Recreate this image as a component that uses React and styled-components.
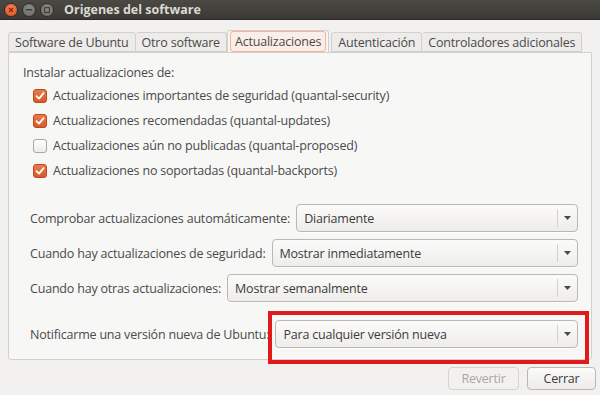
import React from "react";
import styled, { createGlobalStyle } from "styled-components";

const Global = createGlobalStyle`
  html, body {
    margin: 0;
    padding: 0;
    background: #f2f1ef;
  }
  body {
    font-family: "Open Sans", "Noto Sans", sans-serif;
    font-size: 12.5px;
    letter-spacing: -0.2px;
    color: #4a4a4a;
  }
`;

const Window = styled.div`
  width: 600px;
  height: 395px;
  overflow: hidden;
  display: flex;
  flex-direction: column;
  background: #f2f1ef;
`;

const TitleBar = styled.div`
  height: 19px;
  display: flex;
  align-items: center;
  padding-left: 4px;
  background: linear-gradient(#4a4944, #3b3a36);
  border-bottom: 1px solid #2c2b28;
`;

const WinButton = styled.span`
  width: 12px;
  height: 12px;
  border-radius: 50%;
  margin-right: 4px;
  display: flex;
  align-items: center;
  justify-content: center;
  background: ${(p) =>
    p.$close
      ? "radial-gradient(circle at 50% 35%, #f57d52, #e0541f)"
      : "radial-gradient(circle at 50% 35%, #8a8984, #6a6965)"};
  border: 1px solid #2f2e2b;
`;

const Title = styled.span`
  margin-left: 6px;
  font-weight: 700;
  font-size: 12.5px;
  color: #dcd9d2;
  letter-spacing: 0;
`;

const Body = styled.div`
  flex: 1;
  display: flex;
  flex-direction: column;
  padding: 10px 8px 0 8px;
`;

const Tabs = styled.div`
  display: flex;
  align-items: flex-end;
  height: 22px;
`;

const Tab = styled.div`
  height: ${(p) => (p.$active ? "22px" : "20px")};
  box-sizing: border-box;
  display: flex;
  align-items: center;
  padding: 0 ${(p) => (p.$active ? "2px" : "6px")};
  margin-right: ${(p) => (p.$active ? "2px" : "0")};
  border: 1px solid #d3d0ca;
  border-bottom: ${(p) => (p.$active ? "none" : "1px solid #d3d0ca")};
  border-left: ${(p) => (p.$first || p.$active ? "1px solid #d3d0ca" : "none")};
  border-radius: 3px 3px 0 0;
  background: ${(p) => (p.$active ? "#f7f7f6" : "#edecea")};
  color: #4a4a4a;
  white-space: nowrap;
`;

const FocusRing = styled.span`
  padding: 1px 4px;
  border: 1px solid #f3b39b;
  border-radius: 3px;
  background: #fbeee8;
`;

const Panel = styled.div`
  height: 308px;
  box-sizing: border-box;
  border: 1px solid #d3d0ca;
  border-radius: 0 0 3px 3px;
  background: #f7f7f6;
  padding: 10px 13px 0 14px;
  display: flex;
  flex-direction: column;
`;

const Heading = styled.div`
  height: 20px;
  line-height: 20px;
`;

const CheckList = styled.div`
  display: flex;
  flex-direction: column;
  padding: 0 0 0 10px;
`;

const CheckRow = styled.label`
  height: 25px;
  display: flex;
  align-items: center;
  gap: 6px;
`;

const Box = styled.span`
  width: 14px;
  height: 14px;
  box-sizing: border-box;
  border-radius: 3px;
  display: flex;
  align-items: center;
  justify-content: center;
  border: 1px solid ${(p) => (p.$on ? "#b9491c" : "#a9a6a0")};
  background: ${(p) =>
    p.$on ? "linear-gradient(#ec7a4b, #d85a28)" : "linear-gradient(#ffffff, #eeedeb)"};
`;

const Selects = styled.div`
  display: flex;
  flex-direction: column;
  gap: 7px;
  padding: 21px 0 0 7px;
`;

const SelectRow = styled.div`
  display: flex;
  align-items: center;
  gap: 6px;
  height: 28px;
  margin-top: ${(p) => (p.$spaced ? "11px" : "0")};
  white-space: nowrap;
`;

const ComboWrap = styled.div`
  flex: 1;
  position: relative;
  ${(p) =>
    p.$marked &&
    `
    &::after {
      content: "";
      position: absolute;
      left: -7px;
      right: -11px;
      top: -9px;
      bottom: -16px;
      border: 4px solid #e0191c;
      pointer-events: none;
    }
  `}
`;

const Combo = styled.div`
  height: 28px;
  box-sizing: border-box;
  display: flex;
  align-items: center;
  border: 1px solid #bbb8b2;
  border-radius: 4px;
  background: linear-gradient(#fbfbfa, #eeedeb);
  box-shadow: 0 1px 0 rgba(255, 255, 255, 0.8);
  color: #3c3c3c;
`;

const ComboText = styled.span`
  flex: 1;
  padding-left: 7px;
`;

const ComboArrow = styled.span`
  width: 19px;
  height: 18px;
  border-left: 1px solid #d4d1cb;
  display: flex;
  align-items: center;
  justify-content: center;
`;

const Footer = styled.div`
  display: flex;
  justify-content: flex-end;
  gap: 8px;
  padding-top: 7px;
  margin-right: -4px;
`;

const Button = styled.div`
  height: 23px;
  width: ${(p) => p.$w}px;
  box-sizing: border-box;
  display: flex;
  align-items: center;
  justify-content: center;
  border: 1px solid ${(p) => (p.$disabled ? "#d6d4cf" : "#bbb8b2")};
  border-radius: 4px;
  background: ${(p) =>
    p.$disabled ? "#f2f1ef" : "linear-gradient(#fbfbfa, #ecebe9)"};
  color: ${(p) => (p.$disabled ? "#a9a7a3" : "#3c3c3c")};
`;

const Check = () => (
  <svg width="10" height="10" viewBox="0 0 10 10">
    <path d="M1.5 5.2 L4 7.6 L8.6 2.2" fill="none" stroke="#fff" strokeWidth="1.8" strokeLinecap="round" strokeLinejoin="round" />
  </svg>
);

const Arrow = () => (
  <svg width="7" height="4" viewBox="0 0 7 4">
    <path d="M0 0 H7 L3.5 4 Z" fill="#4a4a4a" />
  </svg>
);

const checks = [
  ["Actualizaciones importantes de seguridad (quantal-security)", true],
  ["Actualizaciones recomendadas (quantal-updates)", true],
  ["Actualizaciones aún no publicadas (quantal-proposed)", false],
  ["Actualizaciones no soportadas (quantal-backports)", true],
];

const selects = [
  ["Comprobar actualizaciones automáticamente:", "Diariamente"],
  ["Cuando hay actualizaciones de seguridad:", "Mostrar inmediatamente"],
  ["Cuando hay otras actualizaciones:", "Mostrar semanalmente"],
];

const Select = ({ value, marked }) => (
  <ComboWrap $marked={marked}>
    <Combo>
      <ComboText>{value}</ComboText>
      <ComboArrow>
        <Arrow />
      </ComboArrow>
    </Combo>
  </ComboWrap>
);

const App = () => {
  return (
    <Window>
      <Global />
      <TitleBar>
        <WinButton $close>
          <svg width="6" height="6" viewBox="0 0 6 6">
            <path d="M1 1 L5 5 M5 1 L1 5" stroke="#7a2a0e" strokeWidth="1.2" />
          </svg>
        </WinButton>
        <WinButton>
          <svg width="6" height="2" viewBox="0 0 6 2">
            <rect width="6" height="1.5" fill="#3f3e3a" />
          </svg>
        </WinButton>
        <WinButton>
          <svg width="6" height="6" viewBox="0 0 6 6">
            <rect x="0.6" y="0.6" width="4.8" height="4.8" fill="none" stroke="#3f3e3a" strokeWidth="1.1" />
          </svg>
        </WinButton>
        <Title>Origenes del software</Title>
      </TitleBar>
      <Body>
        <Tabs>
          <Tab $first>Software de Ubuntu</Tab>
          <Tab>Otro software</Tab>
          <Tab $active>
            <FocusRing>Actualizaciones</FocusRing>
          </Tab>
          <Tab $first>Autenticación</Tab>
          <Tab>Controladores adicionales</Tab>
        </Tabs>
        <Panel>
          <Heading>Instalar actualizaciones de:</Heading>
          <CheckList>
            {checks.map(([label, on]) => (
              <CheckRow key={label}>
                <Box $on={on}>{on && <Check />}</Box>
                {label}
              </CheckRow>
            ))}
          </CheckList>
          <Selects>
            {selects.map(([label, value]) => (
              <SelectRow key={label}>
                {label}
                <Select value={value} />
              </SelectRow>
            ))}
            <SelectRow $spaced>
              Notificarme una versión nueva de Ubuntu:
              <Select value="Para cualquier versión nueva" marked />
            </SelectRow>
          </Selects>
        </Panel>
        <Footer>
          <Button $w={71} $disabled>Revertir</Button>
          <Button $w={69}>Cerrar</Button>
        </Footer>
      </Body>
    </Window>
  );
};

export default App;
